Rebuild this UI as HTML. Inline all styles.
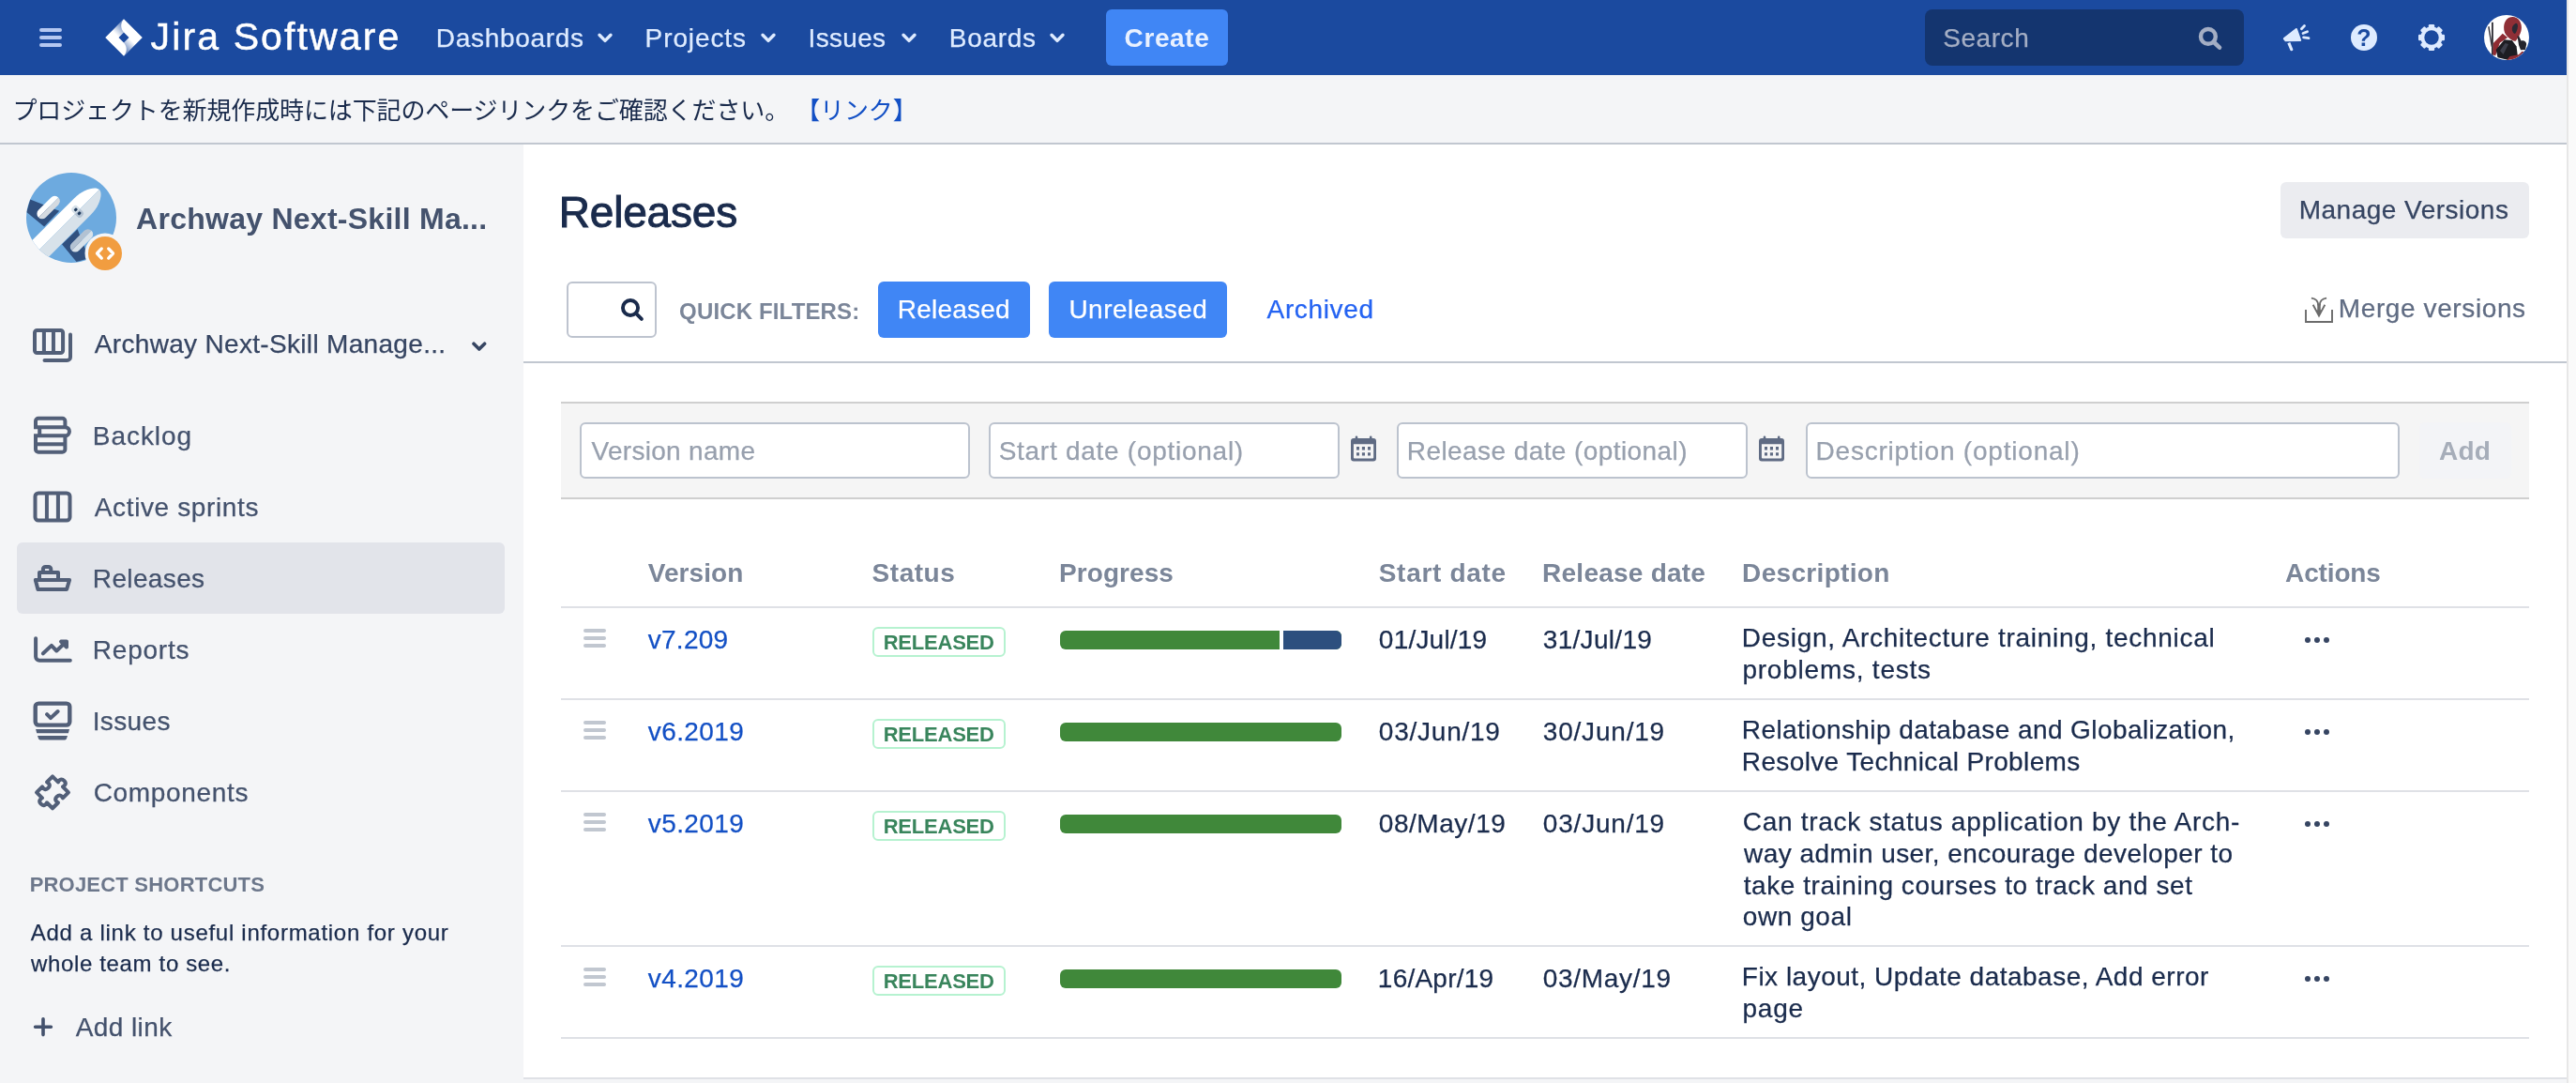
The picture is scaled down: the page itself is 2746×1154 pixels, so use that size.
<!DOCTYPE html>
<html lang="en">
<head>
<meta charset="utf-8">
<title>Releases - Archway Next-Skill Management - Jira</title>
<style>
html,body{margin:0;padding:0}
body{width:2746px;height:1154px;overflow:hidden;background:#fafafa;position:relative;
  font-family:"Liberation Sans","Noto Sans CJK JP",sans-serif;font-size:28px;line-height:1;color:#1a2b4c;-webkit-text-stroke:0.25px}
a{text-decoration:none;color:inherit}
ul,ol{list-style:none;margin:0;padding:0}
h1,h2,h3,p{margin:0;font-weight:normal}
svg{display:block;position:absolute;overflow:visible}
.abs{position:absolute;white-space:nowrap}
#page{will-change:transform;position:absolute;left:0;top:0;width:2736px;height:1154px;background:#f4f5f7;border-right:2px solid #e7e7e7;overflow:hidden}

/* ---------- header ---------- */
#header{position:absolute;left:0;top:0;width:2736px;height:80px;background:#1b4a9f}
#header .nav a{position:absolute;top:27.3px;color:#deebff;white-space:nowrap}
#header .chev{top:35px}
#logo-text{position:absolute;left:159px;top:19.3px;font-size:41px;color:#fff;white-space:nowrap;-webkit-text-stroke:0.5px #fff}
#create{position:absolute;left:1179px;top:10px;width:130px;height:60px;border-radius:6px;background:#4086f5;
  color:#e9f1ff;font-weight:bold;text-align:center;line-height:60px}
#create span{display:inline-block;line-height:1;vertical-align:middle;position:relative;top:-1px}
#search{position:absolute;left:2052px;top:10px;width:340px;height:60px;border-radius:8px;background:#14356f}
#search>span{position:absolute;left:20px;top:17.2px;color:#a4aec4}

/* ---------- banner ---------- */
#banner{position:absolute;left:0;top:80px;width:2736px;height:72px;border-bottom:2px solid #c1c7d0;background:#f4f5f7;
  font-size:26px;line-height:72px;white-space:nowrap}
#banner p{position:absolute;left:13.4px;top:1.6px;line-height:72px;letter-spacing:-0.12px}
#banner a{color:#1350c5}

/* ---------- sidebar ---------- */
#sidebar{position:absolute;left:0;top:154px;width:558px;height:1000px;background:#f4f5f7;color:#44526d}
#sidebar .abs{position:absolute}
#proj-title{left:144px;top:63.4px;font-size:32px;font-weight:bold;color:#44526d}
#board-name{left:99px;top:199px;color:#364562}
#sidebar nav li{position:absolute;left:18px;width:520px;height:76px;border-radius:6px}
#sidebar nav li.sel{background:#e2e4ea}
#sidebar nav li a{position:absolute;left:81px;top:25px;white-space:nowrap}
#shortcuts-h{left:32px;top:778.2px;font-size:22px;font-weight:bold;color:#6c778b}
#shortcuts-p{left:32px;top:822.9px;font-size:24px;line-height:33.6px;color:#1a2b4c}
#addlink{left:79px;top:927px}

/* ---------- main ---------- */
#main{position:absolute;left:558px;top:154px;width:2178px;height:994px;background:#fff;border-bottom:2px solid #dfe1e6}
#main .abs{position:absolute}
h1#title{position:absolute;left:37px;top:49.1px;font-size:46px;color:#1a2b4c;white-space:nowrap;-webkit-text-stroke:1px #1a2b4c}
.btn{position:absolute;height:60px;border-radius:6px;text-align:center;white-space:nowrap}
.btn>span{position:absolute;left:0;right:0;top:16.3px;text-align:center}
#manage{left:1873px;top:40px;width:265px;background:#ebecf0;color:#364562}
#fsearch{position:absolute;left:46px;top:146px;width:92px;height:56px;border:2px solid #bec4cf;border-radius:6px;background:#fff}
#qf{left:165px;top:165.7px;font-size:24px;font-weight:bold;color:#7b8699}
.btn.blue{background:#4086f5;color:#fff}
#b-rel{left:378px;top:146px;width:162px}
#b-unrel{left:560px;top:146px;width:190px}
#archived{left:791px;top:162.3px;color:#2463f2}
#merge{left:1935px;top:161.3px;color:#606c83}
#sep{position:absolute;left:0;top:231px;width:2178px;height:2px;background:#c1c7d0}

#addform{position:absolute;left:40px;top:274px;width:2098px;height:100px;border-top:2px solid #cfcfcf;border-bottom:2px solid #cfcfcf;background:#f5f5f5}
.inp{position:absolute;top:20px;height:56px;border:2px solid #bcc3ce;border-radius:6px;background:#fff}
.inp>span{position:absolute;left:10px;top:14.7px;color:#98a0ae;white-space:nowrap}
#addbtn{left:2002px;top:36.5px;font-weight:bold;color:#a6adb9}

table#versions{position:absolute;left:40px;top:404px;width:2098px;border-collapse:separate;border-spacing:0;table-layout:fixed}
#versions th{height:88px;padding:0;border-bottom:2px solid #dfe1e6;text-align:left;vertical-align:top;font-weight:bold;color:#7b8699;position:relative}
#versions th>span{position:absolute;top:39.3px;white-space:nowrap}
#versions td{padding:0;border-bottom:2px solid #dfe1e6;vertical-align:top;position:relative}
#versions td .c{position:absolute;top:20.3px;white-space:nowrap}
#versions td.desc{padding:15px 14px 13px 14px;line-height:33.75px;white-space:nowrap}
#versions td.desc span{display:block;position:relative}
#versions a.v{color:#1350c5}
.loz{position:absolute;left:13.5px;top:20px;width:138px;height:27.5px;border:2px solid #b6f2d0;border-radius:6px;background:#fff}
.loz>span{position:absolute;left:10px;top:4.1px;font-size:22px;font-weight:bold;color:#39855c;white-space:nowrap}
.bar{position:absolute;left:14px;top:24px;width:300px;height:20px;border-radius:6px;overflow:hidden;background:#40883a}
.bar i{position:absolute;right:0;top:0;height:20px;width:62px;background:#2d4f7e;border-left:4px solid #fff}
.grip{position:absolute;left:24px;top:22px;width:24px;height:20px}
.grip i{position:absolute;left:0;width:24px;height:4px;border-radius:2px;background:#c1c7d0}
.dots{position:absolute;left:33.5px;top:31px;width:27px;height:6px}
.dots i{position:absolute;top:0;width:6px;height:6px;border-radius:3px;background:#364562}
#versions th,#proj-title,#shortcuts-h,#qf,#create,#addbtn,.loz,#banner{-webkit-text-stroke:0}
#t_logo{letter-spacing:2.13px;position:relative;left:1.54px}
#t_dash{letter-spacing:0.70px;position:relative;left:-0.19px}
#t_proj{letter-spacing:0.90px;position:relative;left:0.08px}
#t_iss{letter-spacing:0.32px;position:relative;left:1.05px}
#t_brd{letter-spacing:0.69px;position:relative;left:0.86px}
#t_create{letter-spacing:0.60px;position:relative;left:-0.05px}
#t_search{letter-spacing:0.55px;position:relative;left:-0.75px}
#t_ptitle{letter-spacing:0.26px;position:relative;left:1.06px}
#t_board{letter-spacing:0.32px;position:relative;left:1.80px}
#t_n1{letter-spacing:0.93px;position:relative;left:-0.16px}
#t_n2{letter-spacing:0.63px;position:relative;left:1.80px}
#t_n3{letter-spacing:0.36px;position:relative;left:-0.16px}
#t_n4{letter-spacing:0.77px;position:relative;left:-0.16px}
#t_n5{letter-spacing:0.39px;position:relative;left:-0.34px}
#t_n6{letter-spacing:0.66px;position:relative;left:0.71px}
#t_sh{letter-spacing:0.21px;position:relative;left:-0.38px}
#t_sp1{letter-spacing:0.72px;position:relative;left:0.79px}
#t_sp2{letter-spacing:0.65px;position:relative;left:1.02px}
#t_al{letter-spacing:0.40px;position:relative;left:1.80px}
#t_h1{letter-spacing:-0.20px;position:relative;left:0.79px}
#t_qf{letter-spacing:0.15px;position:relative;left:1.08px}
#t_brel{letter-spacing:0.23px;position:relative;left:-0.24px}
#t_bunrel{letter-spacing:0.48px;position:relative;left:0.39px}
#t_arch{letter-spacing:0.64px;position:relative;left:1.60px}
#t_manage{letter-spacing:0.49px;position:relative;left:-0.93px}
#t_merge{letter-spacing:0.60px;position:relative;left:-0.16px}
#t_p1{letter-spacing:0.29px;position:relative;left:0.55px}
#t_p2{letter-spacing:0.73px;position:relative;left:-1.36px}
#t_p3{letter-spacing:0.42px;position:relative;left:-1.22px}
#t_p4{letter-spacing:0.79px;position:relative;left:-1.46px}
#t_add{letter-spacing:0.12px;position:relative;left:0.10px}
#t_h_ver{letter-spacing:0.08px;position:relative;left:1.74px}
#t_h_st{letter-spacing:0.51px;position:relative;left:1.11px}
#t_h_pr{letter-spacing:0.05px;position:relative;left:1.10px}
#t_h_sd{letter-spacing:0.69px;position:relative;left:0.75px}
#t_h_rd{letter-spacing:0.24px;position:relative;left:0.10px}
#t_h_de{letter-spacing:0.32px;position:relative;left:0.10px}
#t_h_ac{letter-spacing:-0.15px;position:relative;left:1.10px}
#t_v1{letter-spacing:0.25px;position:relative;left:1.81px}
#t_v2{letter-spacing:0.40px;position:relative;left:1.81px}
#t_v3{letter-spacing:0.40px;position:relative;left:1.81px}
#t_v4{letter-spacing:0.40px;position:relative;left:1.81px}
#t_d1_lz{letter-spacing:-0.21px;position:relative;left:-0.38px}
#t_d2_lz{letter-spacing:-0.21px;position:relative;left:-0.38px}
#t_d3_lz{letter-spacing:-0.21px;position:relative;left:-0.38px}
#t_d4_lz{letter-spacing:-0.21px;position:relative;left:-0.38px}
#t_s1{letter-spacing:0.21px;position:relative;left:0.85px}
#t_s2{letter-spacing:0.76px;position:relative;left:0.85px}
#t_s3{letter-spacing:0.53px;position:relative;left:0.85px}
#t_s4{letter-spacing:0.23px;position:relative;left:-0.16px}
#t_r1{letter-spacing:0.31px;position:relative;left:0.77px}
#t_r2{letter-spacing:0.80px;position:relative;left:0.77px}
#t_r3{letter-spacing:0.79px;position:relative;left:0.85px}
#t_r4{letter-spacing:0.67px;position:relative;left:0.85px}
#t_d1_1{letter-spacing:0.71px;position:relative;left:-2.19px}
#t_d1_2{letter-spacing:0.77px;position:relative;left:-1.57px}
#t_d2_1{letter-spacing:0.42px;position:relative;left:-2.19px}
#t_d2_2{letter-spacing:0.37px;position:relative;left:-2.19px}
#t_d3_1{letter-spacing:0.71px;position:relative;left:-1.31px}
#t_d3_2{letter-spacing:0.45px;position:relative;left:0.02px}
#t_d3_3{letter-spacing:0.56px;position:relative;left:-0.30px}
#t_d3_4{letter-spacing:0.56px;position:relative;left:-1.16px}
#t_d4_1{letter-spacing:0.49px;position:relative;left:-2.19px}
#t_d4_2{letter-spacing:0.78px;position:relative;left:-1.57px}
</style>
</head>
<body>
<div id="page">

<header id="header">
  <svg style="left:42px;top:30px" width="24" height="20" viewBox="0 0 24 20" aria-label="menu"><g fill="#b5c8f1"><rect x="0" y="0" width="24" height="4" rx="2"/><rect x="0" y="8" width="24" height="4" rx="2"/><rect x="0" y="16" width="24" height="4" rx="2"/></g></svg>
  <svg id="logo" style="left:111.5px;top:19.7px" width="40" height="40" viewBox="0 0 40 40" aria-label="Jira">
    <defs>
      <linearGradient id="lg1" gradientUnits="userSpaceOnUse" x1="19" y1="7" x2="10.5" y2="15.5"><stop offset="0" stop-color="#1b4a9f" stop-opacity=".62"/><stop offset="1" stop-color="#1b4a9f" stop-opacity="0"/></linearGradient>
      <linearGradient id="lg2" gradientUnits="userSpaceOnUse" x1="21" y1="33" x2="29.5" y2="24.5"><stop offset="0" stop-color="#1b4a9f" stop-opacity=".62"/><stop offset="1" stop-color="#1b4a9f" stop-opacity="0"/></linearGradient>
    </defs>
    <path fill="#fff" fill-rule="evenodd" d="M20 .2 39.8 20 20 39.8 .2 20Z M20 14.5 25.5 20 20 25.5 14.5 20Z"/>
    <path fill="url(#lg1)" d="M20 .2C16.2 4.6 16.4 10 20 14.5L13 21.5 5.8 14.4Z"/>
    <path fill="url(#lg2)" d="M20 39.8C23.8 35.4 23.6 30 20 25.5L27 18.5 34.2 25.6Z"/>
  </svg>
  <span id="logo-text"><span id="t_logo">Jira Software</span></span>
  <nav class="nav">
    <a style="left:465px" href="#"><span id="t_dash">Dashboards</span></a>
    <a style="left:687.5px" href="#"><span id="t_proj">Projects</span></a>
    <a style="left:860.5px" href="#"><span id="t_iss">Issues</span></a>
    <a style="left:1011px" href="#"><span id="t_brd">Boards</span></a>
  </nav>
  <svg class="chev" style="left:637px" width="16" height="11" viewBox="0 0 16 11"><path d="M2 2.2 8 8.4 14 2.2" fill="none" stroke="#deebff" stroke-width="3.4" stroke-linecap="round" stroke-linejoin="round"/></svg>
  <svg class="chev" style="left:811px" width="16" height="11" viewBox="0 0 16 11"><path d="M2 2.2 8 8.4 14 2.2" fill="none" stroke="#deebff" stroke-width="3.4" stroke-linecap="round" stroke-linejoin="round"/></svg>
  <svg class="chev" style="left:960.5px" width="16" height="11" viewBox="0 0 16 11"><path d="M2 2.2 8 8.4 14 2.2" fill="none" stroke="#deebff" stroke-width="3.4" stroke-linecap="round" stroke-linejoin="round"/></svg>
  <svg class="chev" style="left:1119px" width="16" height="11" viewBox="0 0 16 11"><path d="M2 2.2 8 8.4 14 2.2" fill="none" stroke="#deebff" stroke-width="3.4" stroke-linecap="round" stroke-linejoin="round"/></svg>
  <a id="create" href="#"><span id="t_create">Create</span></a>
  <div id="search"><span><span id="t_search">Search</span></span>
    <svg style="left:289px;top:17px" width="30" height="30" viewBox="0 0 30 30"><circle cx="12.9" cy="11.9" r="7.9" fill="none" stroke="#a4aec4" stroke-width="4.4"/><path d="M18.8 17.8 25 23.6" stroke="#a4aec4" stroke-width="4.6" stroke-linecap="round"/></svg>
  </div>
  <svg style="left:2430px;top:24px" width="36" height="32" viewBox="2430 24 36 32" aria-label="feedback"><g fill="#deebff" stroke="none"><path d="M2434.6 42.6c-1-.6-1-1.900 0-2.600L2447.200 30.300c.6-.5 1.500-.2 1.700.5l4.200 11.700c.3.800-.3 1.600-1.100 1.600L2436 44.300Z"/><path d="M2438.300 46.200l3-1.100 3 7.400c.2.600-.1 1.200-.6 1.400l-.9.300c-.6.200-1.200-.1-1.400-.6Z"/></g><g stroke="#deebff" stroke-width="2.800" stroke-linecap="round" fill="none"><path d="M2453.400 30.700 2456.500 27.500"/><path d="M2455 35.500 2459.600 33.700"/><path d="M2455.600 39.900 2461 40.700"/></g></svg>
  <svg style="left:2506px;top:25.700px" width="28" height="28" viewBox="0 0 28 28" aria-label="help"><circle cx="14" cy="14" r="14" fill="#deebff"/><text x="14" y="23.100" text-anchor="middle" font-family="Liberation Sans, sans-serif" font-weight="bold" font-size="25" fill="#1b4a9f">?</text></svg>
  <svg style="left:2577.700px;top:25.800px" width="28" height="28" viewBox="-14 -14 28 28" aria-label="settings"><g fill="#deebff"><rect x="-3.200" y="-14" width="6.400" height="28" rx="1.200"/><rect x="-3.200" y="-14" width="6.400" height="28" rx="1.200" transform="rotate(45)"/><rect x="-3.200" y="-14" width="6.400" height="28" rx="1.200" transform="rotate(90)"/><rect x="-3.200" y="-14" width="6.400" height="28" rx="1.200" transform="rotate(135)"/></g><circle r="9.600" fill="none" stroke="#deebff" stroke-width="4"/><circle r="7.700" fill="#1b4a9f"/></svg>
  <svg style="left:2648px;top:16px" width="48" height="48" viewBox="0 0 48 48" aria-label="user avatar"><defs><clipPath id="avc"><circle cx="24" cy="24" r="24"/></clipPath></defs><g clip-path="url(#avc)"><rect width="48" height="48" fill="#fff"/><path d="M8 7.700H9.800V43H8Z" fill="#2b2b33"/><path d="M4.100 12.400 5.600 12.100 9 33.400 7.600 33.700Z" fill="#3b3b45"/><path d="M9.800 30.100 19.800 19.800 25.100 23.900 16.800 29.800 12.100 43.500 9.200 42Z" fill="#8f2c33"/><path d="M30.400 2c6 0 9.600 5.500 9.500 11.500-.1 5.500-3 10-6 14-1.500 1-4.500-.5-8-3.500-3.500-3-5-7-4.800-11C21.300 6.500 25 2 30.400 2Z" fill="#8f2f36"/><path d="M33.500 9c1.600-.6 2.600.8 2.400 3.200-.2 2.800-1.300 6-2.900 7.800-1.600-.3-3.200-2.500-3.200-5C29.800 12.300 31.500 9.800 33.500 9Z" fill="#2a2a35"/><path d="M12.700 36.900 21.600 26.300 29.800 26.900 34.600 33.400 35.800 43.400 25.100 47.800 14.500 45.200Z" fill="#1d1d23"/><path d="M17 38 22.500 30 26 31 20.500 42Z" fill="#3d3f4b"/><path d="M24.200 48 27.500 44 36.900 42.300 40.500 38.700 42.800 39.300 33.400 47.500Z" fill="#8f2c33"/><path d="M35.500 22.500 37 22 39.500 27.500C42 26.500 45 28 45.200 31L44 37 39 37.200 37 32Z" fill="#25252d"/></g></svg>
</header>

<div id="banner"><p>プロジェクトを新規作成時には下記のページリンクをご確認ください。 <a href="#">【リンク】</a></p></div>

<aside id="sidebar">
  <svg style="left:20px;top:22px" width="120" height="120" viewBox="0 0 120 120" aria-label="project avatar">
    <defs><clipPath id="pac"><circle cx="56" cy="56" r="48"/></clipPath></defs>
    <g clip-path="url(#pac)">
      <rect width="120" height="120" fill="#6daadf"/>
      <path d="M12.200 36.600 43.200 48.800 27.100 65.400 8.300 49.900Z" fill="#30507f"/>
      <path d="M62.600 68.200 74.800 99.200 61.500 103.100 46 84.300Z" fill="#30507f"/>
      <g transform="translate(56 56) rotate(-45)">
        <path d="M-60-12.500H17C31-12.500 42.300-5.500 42.300 0H-60Z" fill="#fff"/>
        <path d="M-60 12.500H17C31 12.500 42.300 5.500 42.300 0H-60Z" fill="#d8e2ea"/>
        <path d="M-19-30.500H0a5.500 5.500 0 0 1 5.500 5.500H-24.500a5.500 5.500 0 0 1 5.500-5.500Z" fill="#fff"/>
        <path d="M-24.500-25H5.500a5.500 5.500 0 0 1-5.500 5.500H-19a5.500 5.500 0 0 1-5.500-5.500Z" fill="#d5dae0"/>
        <path d="M-19 19.500H0a5.500 5.500 0 0 1 5.500 5.500H-24.500a5.500 5.500 0 0 1 5.500-5.500Z" fill="#b3c2d2"/>
        <path d="M-24.500 25H5.500a5.500 5.500 0 0 1-5.500 5.500H-19a5.500 5.500 0 0 1-5.500-5.500Z" fill="#d8e2ea"/>
        <path d="M5.400-3.500a3.500 3.500 0 0 1 3.500-3.500h1a3.500 3.500 0 0 1 3.500 3.500V0H5.400Z" fill="#d8e2ea"/>
        <path d="M5.400 0h8V3.500a3.500 3.500 0 0 1-3.500 3.500h-1a3.500 3.500 0 0 1-3.500-3.500Z" fill="#b3c2d2"/>
        <rect x="7.600" y="-4.200" width="3.600" height="3" rx="1" fill="#1f3a5c"/>
        <rect x="7.600" y="1.200" width="3.600" height="3" rx="1" fill="#1f3a5c"/>
      </g>
    </g>
    <circle cx="92" cy="94" r="21.500" fill="#f4f5f7"/>
    <circle cx="92" cy="94" r="18" fill="#f19d40"/>
    <path d="M88.300 88.900 83.500 94 88.300 99.100M95.700 88.900 100.500 94 95.700 99.100" fill="none" stroke="#fff" stroke-width="3.300" stroke-linecap="round" stroke-linejoin="round"/>
  </svg>
  <h2 class="abs" id="proj-title"><span id="t_ptitle">Archway Next-Skill Ma...</span></h2>

  <svg style="left:32px;top:194px" width="48" height="40" viewBox="32 348 48 40" aria-label="board"><g fill="none" stroke="#525f78" stroke-width="4" stroke-linejoin="round" stroke-linecap="round"><rect x="37" y="352" width="30.100" height="24.100" rx="2.500"/><path d="M46.900 352V376M56.950 352V376"/><path d="M75 356.500V380.400a3.500 3.500 0 0 1-3.500 3.500H47.500"/></g></svg>
  <a class="abs" id="board-name" href="#"><span id="t_board">Archway Next-Skill Manage...</span></a>
  <svg style="left:502.500px;top:209.500px" width="16" height="11" viewBox="0 0 16 11"><path d="M2 2.200 7.800 8 13.600 2.200" fill="none" stroke="#364562" stroke-width="3.600" stroke-linecap="round" stroke-linejoin="round"/></svg>

  <nav>
    <ul>
      <li style="top:272px">
        <svg style="left:16px;top:16px" width="44" height="44" viewBox="34 442 44 44"><g fill="none" stroke="#525f78" stroke-width="4" stroke-linejoin="round"><path d="M38 455.200V448.800a3 3 0 0 1 3-3H66.400a3 3 0 0 1 3 3V455.200"/><path d="M36 455.200H69.400a4.550 4.550 0 0 1 0 9.100H36" stroke-linecap="butt"/><path d="M42.200 455.200V464.300"/><path d="M38 464.300V478.700a3 3 0 0 0 3 3H66.400a3 3 0 0 0 3-3V464.300"/><path d="M38 473.300H69.400"/></g></svg>
        <a href="#"><span id="t_n1">Backlog</span></a></li>
      <li style="top:348px">
        <svg style="left:16px;top:16px" width="44" height="44" viewBox="34 518 44 44"><g fill="none" stroke="#525f78" stroke-width="4" stroke-linejoin="round"><rect x="37.500" y="525.400" width="37" height="29.100" rx="3.500"/><path d="M49.900 525.400V554.500M61.900 525.400V554.500"/></g></svg>
        <a href="#"><span id="t_n2">Active sprints</span></a></li>
      <li class="sel" style="top:424px">
        <svg style="left:16px;top:16px" width="44" height="44" viewBox="34 594 44 44"><g fill="none" stroke="#525f78" stroke-width="4" stroke-linejoin="round"><path d="M37.800 617.900H74.100L71.100 628H40.400Z"/><path d="M42 617.900V610H62V617.900"/><path d="M45.900 610V606.500a2.500 2.500 0 0 1 2.500-2.500h3.400a2.500 2.500 0 0 1 2.500 2.500V610"/></g></svg>
        <a href="#"><span id="t_n3">Releases</span></a></li>
      <li style="top:500px">
        <svg style="left:16px;top:16px" width="44" height="44" viewBox="34 670 44 44"><g fill="none" stroke="#525f78" stroke-width="4" stroke-linejoin="round" stroke-linecap="round"><path d="M38.100 680.200V699.800a4 4 0 0 0 4 4H74.800"/><path d="M45.900 696.300 54.900 687.900 60.300 693.500 69.500 684.800"/><path d="M65 683.600H71V689.600Z" fill="#525f78"/></g></svg>
        <a href="#"><span id="t_n4">Reports</span></a></li>
      <li style="top:576px">
        <svg style="left:16px;top:16px" width="44" height="44" viewBox="34 746 44 44"><g fill="none" stroke="#525f78" stroke-width="4.400" stroke-linejoin="round" stroke-linecap="round"><rect x="37.700" y="749.600" width="36.600" height="23" rx="3.500"/><path d="M50.100 761.200 54 765.100 61.600 758" stroke-width="4"/></g><path d="M38.100 777.100H74L72.900 781.300H39.200ZM40 784.100H72L71 787a2 2 0 0 1-1.800 1.400H42.800a2 2 0 0 1-1.800-1.400Z" fill="#525f78"/></svg>
        <a href="#"><span id="t_n5">Issues</span></a></li>
      <li style="top:652px">
        <svg style="left:16px;top:16px" width="44" height="44" viewBox="34 822 44 44"><g transform="translate(56 844.300) rotate(45)" fill="none" stroke="#525f78" stroke-width="4" stroke-linejoin="round"><path d="M-12-12H-3.500C-3.500-12-5.500-17.500 0-17.500 5.500-17.500 3.500-12 3.500-12H12V-3.500C12-3.500 6.500-5.500 6.500 0 6.500 5.500 12 3.500 12 3.500V12H3.500C3.500 12 5.500 17.500 0 17.500-5.500 17.500-3.500 12-3.500 12H-12V3.500C-12 3.500-6.500 5.500-6.500 0-6.500-5.500-12-3.500-12-3.500Z"/></g></svg>
        <a href="#"><span id="t_n6">Components</span></a></li>
    </ul>
  </nav>

  <h3 class="abs" id="shortcuts-h"><span id="t_sh">PROJECT SHORTCUTS</span></h3>
  <p class="abs" id="shortcuts-p"><span id="t_sp1">Add a link to useful information for your</span><br><span id="t_sp2">whole team to see.</span></p>
  <svg style="left:34px;top:928px" width="24" height="24" viewBox="34 1082 24 24"><path d="M37.600 1094.200H54.400M46 1085.800V1102.600" fill="none" stroke="#44526d" stroke-width="3.600" stroke-linecap="round"/></svg>
  <a class="abs" id="addlink" href="#"><span id="t_al">Add link</span></a>
</aside>

<main id="main">
  <h1 id="title"><span id="t_h1">Releases</span></h1>
  <a class="btn" id="manage" href="#"><span><span id="t_manage">Manage Versions</span></span></a>

  <div id="fsearch"><svg style="left:54px;top:15px" width="28" height="28" viewBox="0 0 28 28" aria-label="search"><circle cx="12" cy="11" r="8.050" fill="none" stroke="#1a2b4c" stroke-width="3.900"/><path d="M17.900 16.900 23.900 22.900" stroke="#1a2b4c" stroke-width="3.900" stroke-linecap="round"/></svg></div>
  <span class="abs" id="qf"><span id="t_qf">QUICK FILTERS:</span></span>
  <a class="btn blue" id="b-rel" href="#"><span><span id="t_brel">Released</span></span></a>
  <a class="btn blue" id="b-unrel" href="#"><span><span id="t_bunrel">Unreleased</span></span></a>
  <a class="abs" id="archived" href="#"><span id="t_arch">Archived</span></a>
  <svg style="left:1898px;top:162px" width="32" height="30" viewBox="2456 316 32 30" aria-label="merge"><g fill="none" stroke="#6c6c6c" stroke-width="1.900"><path d="M2458 330.100V343H2486V330.100"/><path d="M2463.900 317.600C2469 318.200 2471.200 321 2471.200 325.500M2480.100 317.600C2475 318.200 2472.800 321 2472.800 325.500"/><path d="M2465.700 324.800 2472 336.600 2478.300 324.800" stroke-linejoin="miter"/><path d="M2472 323.500V334" stroke-width="3.500"/></g><path d="M2468.800 330.500 2472 336.800 2475.200 330.500Z" fill="#6c6c6c"/></svg>
  <a class="abs" id="merge" href="#"><span id="t_merge">Merge versions</span></a>
  <div id="sep"></div>

  <form id="addform" action="#">
    <div class="inp" style="left:20px;width:412px"><span><span id="t_p1">Version name</span></span></div>
    <div class="inp" style="left:456px;width:370px"><span><span id="t_p2">Start date (optional)</span></span></div>
    <svg style="left:842px;top:34px" width="28" height="28" viewBox="0 0 28 28" aria-label="calendar"><path fill="#5f6b83" fill-rule="evenodd" d="M4.700 1.700a1.300 1.300 0 0 1 2.600 0V3H19.900V1.700a1.300 1.300 0 0 1 2.600 0V3H24a3 3 0 0 1 3 3V24.500a3 3 0 0 1-3 3H3a3 3 0 0 1-3-3V6a3 3 0 0 1 3-3H4.700ZM2.900 9.200V23.400a1 1 0 0 0 1 1H23.200a1 1 0 0 0 1-1V9.200ZM6 12h3v3.500H6Zm5.900 0H15v3.500h-3.100Zm6.100 0h3v3.500h-3ZM6 18.200h3v3.400H6Zm5.900 0H15v3.400h-3.100Zm6.100 0h3v3.400h-3Z"/></svg>
    <div class="inp" style="left:891px;width:369.500px"><span><span id="t_p3">Release date (optional)</span></span></div>
    <svg style="left:1277px;top:34px" width="28" height="28" viewBox="0 0 28 28" aria-label="calendar"><path fill="#5f6b83" fill-rule="evenodd" d="M4.700 1.700a1.300 1.300 0 0 1 2.600 0V3H19.900V1.700a1.300 1.300 0 0 1 2.600 0V3H24a3 3 0 0 1 3 3V24.500a3 3 0 0 1-3 3H3a3 3 0 0 1-3-3V6a3 3 0 0 1 3-3H4.700ZM2.900 9.200V23.400a1 1 0 0 0 1 1H23.200a1 1 0 0 0 1-1V9.200ZM6 12h3v3.500H6Zm5.900 0H15v3.500h-3.100Zm6.100 0h3v3.500h-3ZM6 18.200h3v3.400H6Zm5.900 0H15v3.400h-3.100Zm6.100 0h3v3.400h-3Z"/></svg>
    <div class="inp" style="left:1327px;width:629px"><span><span id="t_p4">Description (optional)</span></span></div>
    <div style="position:absolute;left:1981px;top:20px;width:98px;height:60px;border-radius:6px;background:#f3f4f7"></div>
    <span class="abs" id="addbtn"><span id="t_add">Add</span></span>
  </form>

  <table id="versions">
    <colgroup><col style="width:79px"><col style="width:239.500px"><col style="width:199.500px"><col style="width:341px"><col style="width:175px"><col style="width:213px"><col style="width:578px"><col style="width:273px"></colgroup>
    <thead>
      <tr><th></th><th><span style="left:12px"><span id="t_h_ver">Version</span></span></th><th><span style="left:12px"><span id="t_h_st">Status</span></span></th><th><span style="left:12px"><span id="t_h_pr">Progress</span></span></th><th><span style="left:12px"><span id="t_h_sd">Start date</span></span></th><th><span style="left:12px"><span id="t_h_rd">Release date</span></span></th><th><span style="left:12px"><span id="t_h_de">Description</span></span></th><th><span style="left:12px"><span id="t_h_ac">Actions</span></span></th></tr>
    </thead>
    <tbody>
      <tr style="height:98px">
        <td><div class="grip"><i style="top:0"></i><i style="top:8px"></i><i style="top:16px"></i></div></td>
        <td><a class="c v" style="left:12px" href="#"><span id="t_v1">v7.209</span></a></td>
        <td><div class="loz"><span><span id="t_d1_lz">RELEASED</span></span></div></td>
        <td><div class="bar"><i></i></div></td>
        <td><span class="c" style="left:12px"><span id="t_s1">01/Jul/19</span></span></td>
        <td><span class="c" style="left:12px"><span id="t_r1">31/Jul/19</span></span></td>
        <td class="desc"><span id="t_d1_1">Design, Architecture training, technical</span><span id="t_d1_2">problems, tests</span></td>
        <td><div class="dots"><i style="left:0"></i><i style="left:10.300px"></i><i style="left:20.600px"></i></div></td>
      </tr>
      <tr style="height:98px">
        <td><div class="grip"><i style="top:0"></i><i style="top:8px"></i><i style="top:16px"></i></div></td>
        <td><a class="c v" style="left:12px" href="#"><span id="t_v2">v6.2019</span></a></td>
        <td><div class="loz"><span><span id="t_d2_lz">RELEASED</span></span></div></td>
        <td><div class="bar"></div></td>
        <td><span class="c" style="left:12px"><span id="t_s2">03/Jun/19</span></span></td>
        <td><span class="c" style="left:12px"><span id="t_r2">30/Jun/19</span></span></td>
        <td class="desc"><span id="t_d2_1">Relationship database and Globalization,</span><span id="t_d2_2">Resolve Technical Problems</span></td>
        <td><div class="dots"><i style="left:0"></i><i style="left:10.300px"></i><i style="left:20.600px"></i></div></td>
      </tr>
      <tr style="height:165px">
        <td><div class="grip"><i style="top:0"></i><i style="top:8px"></i><i style="top:16px"></i></div></td>
        <td><a class="c v" style="left:12px" href="#"><span id="t_v3">v5.2019</span></a></td>
        <td><div class="loz"><span><span id="t_d3_lz">RELEASED</span></span></div></td>
        <td><div class="bar"></div></td>
        <td><span class="c" style="left:12px"><span id="t_s3">08/May/19</span></span></td>
        <td><span class="c" style="left:12px"><span id="t_r3">03/Jun/19</span></span></td>
        <td class="desc"><span id="t_d3_1">Can track status application by the Arch-</span><span id="t_d3_2">way admin user, encourage developer to</span><span id="t_d3_3">take training courses to track and set</span><span id="t_d3_4">own goal</span></td>
        <td><div class="dots"><i style="left:0"></i><i style="left:10.300px"></i><i style="left:20.600px"></i></div></td>
      </tr>
      <tr style="height:98px">
        <td><div class="grip"><i style="top:0"></i><i style="top:8px"></i><i style="top:16px"></i></div></td>
        <td><a class="c v" style="left:12px" href="#"><span id="t_v4">v4.2019</span></a></td>
        <td><div class="loz"><span><span id="t_d4_lz">RELEASED</span></span></div></td>
        <td><div class="bar"></div></td>
        <td><span class="c" style="left:12px"><span id="t_s4">16/Apr/19</span></span></td>
        <td><span class="c" style="left:12px"><span id="t_r4">03/May/19</span></span></td>
        <td class="desc"><span id="t_d4_1">Fix layout, Update database, Add error</span><span id="t_d4_2">page</span></td>
        <td><div class="dots"><i style="left:0"></i><i style="left:10.300px"></i><i style="left:20.600px"></i></div></td>
      </tr>
    </tbody>
  </table>
</main>

</div>
</body>
</html>
